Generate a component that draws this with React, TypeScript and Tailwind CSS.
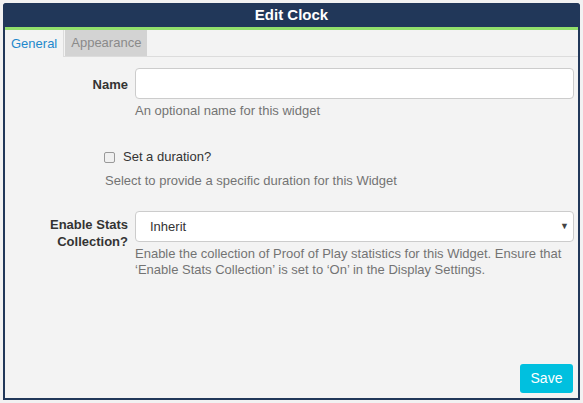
import React from 'react';

const font = { fontFamily: '"Liberation Sans", Arial, sans-serif' };

export default function App() {
  return (
    <div className="w-[583px] h-[403px] bg-[#f2f2f2] p-[3px]" style={font}>
      <div className="flex flex-col h-full border-2 border-t-0 border-[#213759] rounded-t-[4px] bg-[#f3f3f3]">
        <div className="h-[24px] bg-[#213759] rounded-t-[3px] -mx-[2px] flex items-center justify-center text-white font-bold text-[15px]">
          Edit Clock
        </div>
        <div className="h-[3px] bg-[#92df6b]" />
        <div className="flex h-[27px] border-b border-[#dcdcdc]">
          <div className="px-[6px] flex items-center text-[13px] text-[#1e88cc] border-r border-[#dcdcdc] -mb-px bg-[#f3f3f3]">
            General
          </div>
          <div className="ml-px px-[6px] flex items-center text-[13px] text-[#8a8a8a] bg-[#d3d3d3]">
            Appearance
          </div>
        </div>
        <div className="flex-1 flex flex-col text-[13px]">
          <div className="flex mt-[11px]">
            <div className="w-[130px] pr-[7px] text-right font-bold text-[#333] pt-[7px]">Name</div>
            <div className="flex-1 pr-[4px]">
              <input className="block w-full h-[31px] bg-white border border-[#cccccc] rounded-[4px]" />
              <div className="mt-[3px] text-[#737373] leading-[18px]">An optional name for this widget</div>
            </div>
          </div>
          <div className="flex items-center mt-[28px] pl-[99px] gap-[8px] text-[#333]">
            <span className="w-[11px] h-[11px] border border-[#999] rounded-[2px] bg-[#f0f0f0]" />
            <span className="leading-[18px]">Set a duration?</span>
          </div>
          <div className="mt-[6px] pl-[100px] text-[#737373] leading-[18px]">
            Select to provide a specific duration for this Widget
          </div>
          <div className="flex mt-[21px]">
            <div className="w-[130px] pr-[7px] text-right font-bold text-[#333] leading-[17px] pt-[5px]">
              Enable Stats
              <br />
              Collection?
            </div>
            <div className="flex-1 pr-[4px]">
              <div className="flex items-center justify-between h-[31px] bg-white border border-[#cccccc] rounded-[4px] pl-[14px] pr-[4px] text-[#333]">
                <span>Inherit</span>
                <span className="text-[9px] text-[#444]">▼</span>
              </div>
              <div className="mt-[4px] text-[#737373] leading-[16px]">
                Enable the collection of Proof of Play statistics for this Widget. Ensure that
                ‘Enable Stats Collection’ is set to ‘On’ in the Display Settings.
              </div>
            </div>
          </div>
          <div className="flex-1" />
          <div className="flex justify-end pr-[5px] pb-[5px]">
            <button className="w-[53px] h-[29px] bg-[#00c0df] text-white text-[14px] rounded-[3px]">Save</button>
          </div>
        </div>
      </div>
    </div>
  );
}
